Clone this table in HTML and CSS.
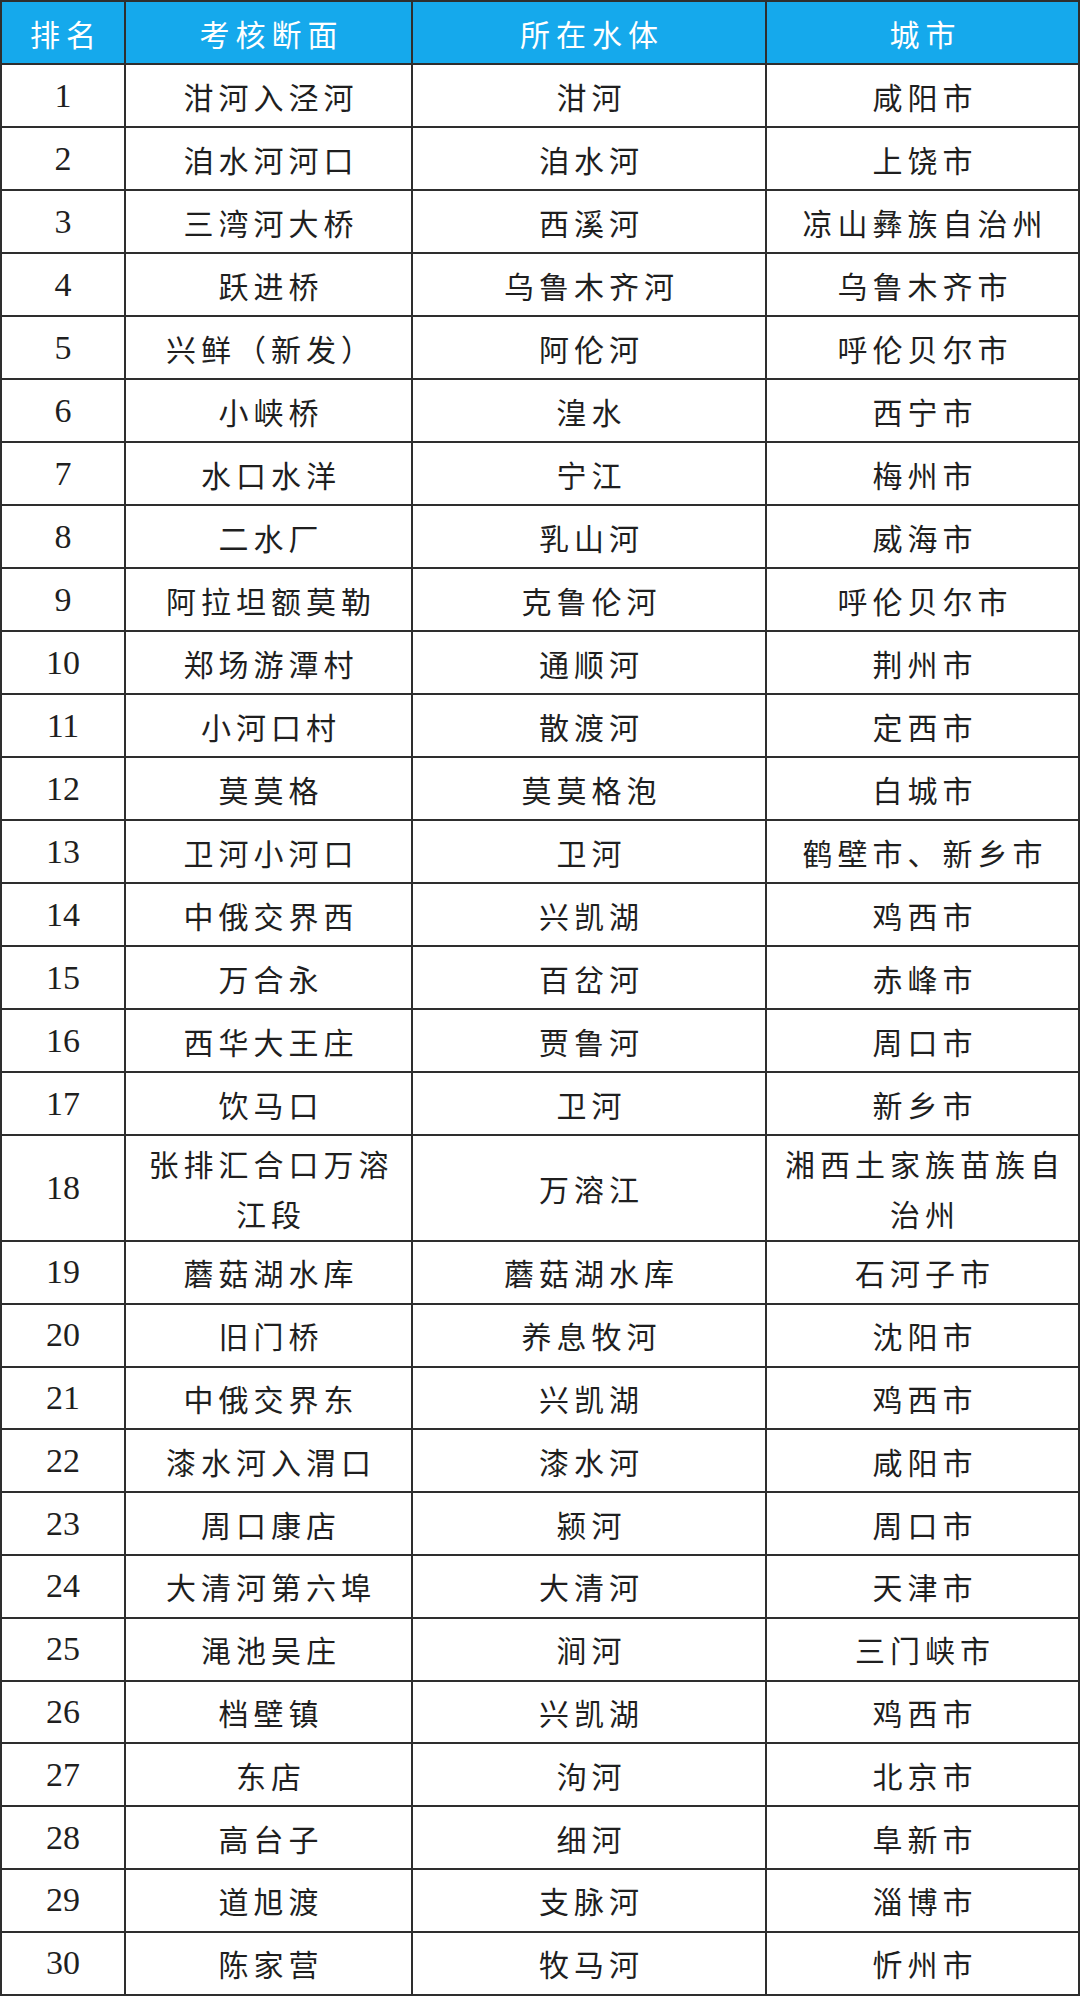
FILE: index.html
```html
<!DOCTYPE html>
<html lang="zh-CN">
<head>
<meta charset="utf-8">
<title>考核断面排名</title>
<link rel="stylesheet" href="styles.css">
</head>
<body>
<table class="rank">
<colgroup>
<col class="c-rank"><col class="c-sec"><col class="c-water"><col class="c-city">
</colgroup>
<thead>
<tr><th>排名</th><th>考核断面</th><th>所在水体</th><th>城市</th></tr>
</thead>
<tbody>
<tr><td class="num">1</td><td>泔河入泾河</td><td>泔河</td><td>咸阳市</td></tr>
<tr><td class="num">2</td><td>洎水河河口</td><td>洎水河</td><td>上饶市</td></tr>
<tr><td class="num">3</td><td>三湾河大桥</td><td>西溪河</td><td>凉山彝族自治州</td></tr>
<tr><td class="num">4</td><td>跃进桥</td><td>乌鲁木齐河</td><td>乌鲁木齐市</td></tr>
<tr><td class="num">5</td><td>兴鲜（新发）</td><td>阿伦河</td><td>呼伦贝尔市</td></tr>
<tr><td class="num">6</td><td>小峡桥</td><td>湟水</td><td>西宁市</td></tr>
<tr><td class="num">7</td><td>水口水洋</td><td>宁江</td><td>梅州市</td></tr>
<tr><td class="num">8</td><td>二水厂</td><td>乳山河</td><td>威海市</td></tr>
<tr><td class="num">9</td><td>阿拉坦额莫勒</td><td>克鲁伦河</td><td>呼伦贝尔市</td></tr>
<tr><td class="num">10</td><td>郑场游潭村</td><td>通顺河</td><td>荆州市</td></tr>
<tr><td class="num">11</td><td>小河口村</td><td>散渡河</td><td>定西市</td></tr>
<tr><td class="num">12</td><td>莫莫格</td><td>莫莫格泡</td><td>白城市</td></tr>
<tr><td class="num">13</td><td>卫河小河口</td><td>卫河</td><td>鹤壁市、新乡市</td></tr>
<tr><td class="num">14</td><td>中俄交界西</td><td>兴凯湖</td><td>鸡西市</td></tr>
<tr><td class="num">15</td><td>万合永</td><td>百岔河</td><td>赤峰市</td></tr>
<tr><td class="num">16</td><td>西华大王庄</td><td>贾鲁河</td><td>周口市</td></tr>
<tr><td class="num">17</td><td>饮马口</td><td>卫河</td><td>新乡市</td></tr>
<tr class="tall"><td class="num">18</td><td>张排汇合口万溶<br>江段</td><td>万溶江</td><td>湘西土家族苗族自<br>治州</td></tr>
<tr><td class="num">19</td><td>蘑菇湖水库</td><td>蘑菇湖水库</td><td>石河子市</td></tr>
<tr><td class="num">20</td><td>旧门桥</td><td>养息牧河</td><td>沈阳市</td></tr>
<tr><td class="num">21</td><td>中俄交界东</td><td>兴凯湖</td><td>鸡西市</td></tr>
<tr><td class="num">22</td><td>漆水河入渭口</td><td>漆水河</td><td>咸阳市</td></tr>
<tr><td class="num">23</td><td>周口康店</td><td>颍河</td><td>周口市</td></tr>
<tr><td class="num">24</td><td>大清河第六埠</td><td>大清河</td><td>天津市</td></tr>
<tr><td class="num">25</td><td>渑池吴庄</td><td>涧河</td><td>三门峡市</td></tr>
<tr><td class="num">26</td><td>档壁镇</td><td>兴凯湖</td><td>鸡西市</td></tr>
<tr><td class="num">27</td><td>东店</td><td>泃河</td><td>北京市</td></tr>
<tr><td class="num">28</td><td>高台子</td><td>细河</td><td>阜新市</td></tr>
<tr><td class="num">29</td><td>道旭渡</td><td>支脉河</td><td>淄博市</td></tr>
<tr><td class="num">30</td><td>陈家营</td><td>牧马河</td><td>忻州市</td></tr>
</tbody>
</table>
</body>
</html>
```
FILE: styles.css
```css
html, body {
  margin: 0;
  padding: 0;
  background: #ffffff;
}

.rank {
  width: 1079px;
  table-layout: fixed;
  border-collapse: collapse;
  border: 2px solid #2e2e2e;
  font-family: "Noto Sans CJK SC", sans-serif;
  color: #1f1f1f;
}

.c-rank { width: 124px; }
.c-sec { width: 287px; }
.c-water { width: 354px; }
.c-city { width: 313px; }

.rank th,
.rank td {
  border: 2px solid #2e2e2e;
  padding: 0 0 0 5px;
  height: 63px;
  text-align: center;
  vertical-align: middle;
  font-size: 30px;
  line-height: 50px;
  letter-spacing: 5px;
  font-weight: 400;
  box-sizing: border-box;
}

.rank tbody tr:nth-child(n+19) td {
  height: 62.8px;
}

.rank th {
  background: #15a9ec;
  color: #ffffff;
  font-weight: 400;
  letter-spacing: 6px;
  padding-left: 6px;
}

.rank td.num {
  font-family: "Liberation Serif", serif;
  font-size: 34px;
  letter-spacing: 0;
  padding-left: 0;
}

.rank tr.tall td {
  height: 106px;
}
```
